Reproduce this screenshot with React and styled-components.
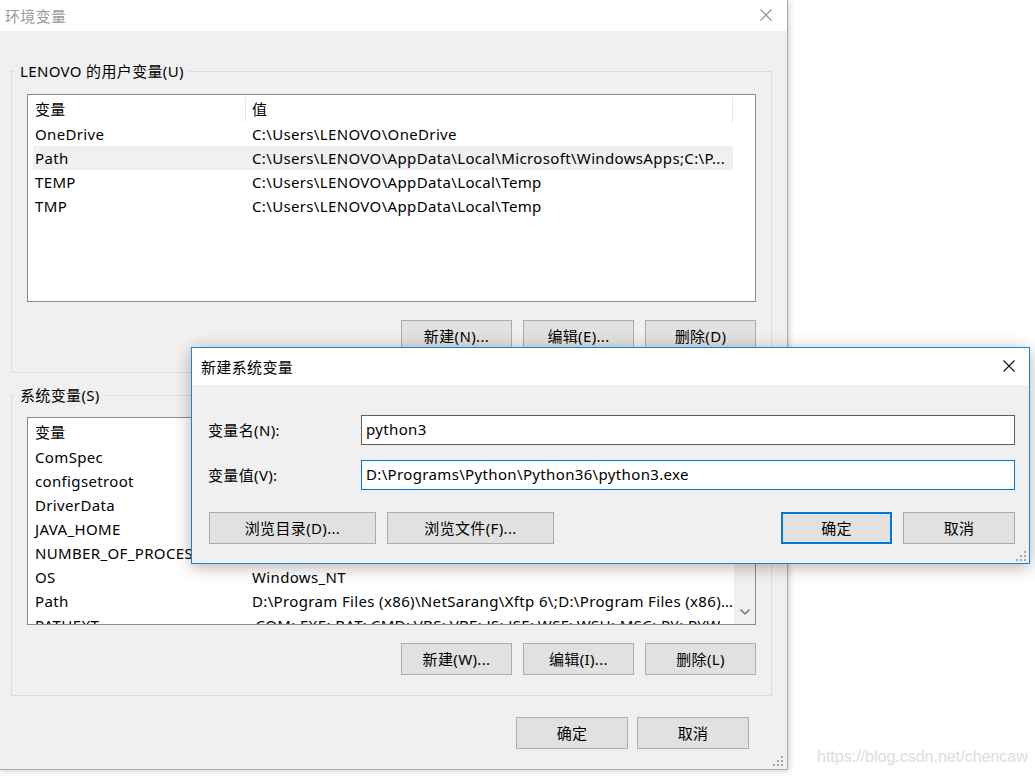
import React from 'react'
import styled, { createGlobalStyle } from 'styled-components'

const GlobalStyle = createGlobalStyle`
  html, body { margin: 0; padding: 0; background: #fff; }
  body {
    font-family: "Noto Sans", "Noto Sans CJK SC", sans-serif;
    font-size: 15px;
    letter-spacing: 0.35px;
    color: #000;
  }
  #root { position: relative; width: 1035px; height: 776px; overflow: hidden; }
`

const userVars = [
  { name: 'OneDrive', value: 'C:\\Users\\LENOVO\\OneDrive' },
  { name: 'Path', value: 'C:\\Users\\LENOVO\\AppData\\Local\\Microsoft\\WindowsApps;C:\\P...', selected: true },
  { name: 'TEMP', value: 'C:\\Users\\LENOVO\\AppData\\Local\\Temp' },
  { name: 'TMP', value: 'C:\\Users\\LENOVO\\AppData\\Local\\Temp' },
]

const systemVars = [
  { name: 'ComSpec', value: 'C:\\WINDOWS\\system32\\cmd.exe' },
  { name: 'configsetroot', value: 'C:\\WINDOWS\\ConfigSetRoot' },
  { name: 'DriverData', value: 'C:\\Windows\\System32\\Drivers\\DriverData' },
  { name: 'JAVA_HOME', value: 'C:\\Program Files\\Java\\jdk1.8.0_201' },
  { name: 'NUMBER_OF_PROCESSORS', value: '8' },
  { name: 'OS', value: 'Windows_NT' },
  { name: 'Path', value: 'D:\\Program Files (x86)\\NetSarang\\Xftp 6\\;D:\\Program Files (x86)...' },
  { name: 'PATHEXT', value: '.COM;.EXE;.BAT;.CMD;.VBS;.VBE;.JS;.JSE;.WSF;.WSH;.MSC;.PY;.PYW' },
]

const Window = styled.div`
  position: relative;
  width: 788px;
  height: 770px;
  box-sizing: border-box;
  border-right: 1px solid #a9a9a9;
  border-bottom: 1px solid #a9a9a9;
  box-shadow: 1px 1px 6px rgba(0, 0, 0, 0.2);
  background: #f0f0f0;
  display: flex;
  flex-direction: column;
`

const TitleBar = styled.div`
  height: ${p => p.$h}px;
  flex: none;
  background: #fff;
  display: flex;
  align-items: center;
  justify-content: space-between;
  padding: 0 ${p => p.$pr}px 1px ${p => p.$pl}px;
  box-sizing: border-box;
  color: ${p => (p.$inactive ? '#9a9a9a' : '#000')};
  font-size: 15px;
`

const Body = styled.div`
  flex: 1;
  display: flex;
  flex-direction: column;
  padding: 0 15px 0 11px;
`

const Group = styled.fieldset`
  margin: ${p => p.$mt}px 0 0;
  padding: 0;
  border: 1px solid #dcdcdc;
  min-width: 0;
`

const Legend = styled.legend`
  margin-left: 3px;
  padding: 0 5px;
  line-height: 20px;
  font-size: 15px;
`

const GroupInner = styled.div`
  padding: ${p => p.$pt}px 15px ${p => p.$pb}px 15px;
  display: flex;
  flex-direction: column;
`

const ListBox = styled.div`
  height: 208px;
  box-sizing: border-box;
  border: 1px solid #8b8b8b;
  background: #fff;
  display: flex;
  overflow: hidden;
`

const ListContent = styled.div`
  flex: 1;
  min-width: 0;
`

const Cols = styled.div`
  display: grid;
  grid-template-columns: 213px 487px;
  padding-left: 5px;
`

const HeaderRow = styled(Cols)`
  height: 27px;
`

const HeaderCell = styled.div`
  margin-top: 2px;
  padding: 0 0 3px ${p => p.$pad}px;
  border-right: 1px solid #e5e5e5;
  display: flex;
  align-items: center;
  box-sizing: border-box;
`

const Row = styled(Cols)`
  height: 24px;
  & > div { background: ${p => (p.$selected ? '#f0f0f0' : 'transparent')}; }
`

const Cell = styled.div`
  padding-left: ${p => p.$pad}px;
  line-height: 24px;
  white-space: nowrap;
  overflow: hidden;
  text-overflow: ellipsis;
`

const Scrollbar = styled.div`
  width: 21px;
  flex: none;
  background: #f0f0f0;
  display: flex;
  flex-direction: column;
  justify-content: flex-end;
`

const ScrollArrow = styled.div`
  height: 23px;
  display: flex;
  align-items: center;
  justify-content: center;
  padding-bottom: 1px;
`

const ButtonRow = styled.div`
  display: flex;
  justify-content: ${p => p.$justify || 'flex-end'};
  gap: ${p => p.$gap}px;
  margin-top: ${p => p.$mt}px;
  padding-right: ${p => p.$pr || 0}px;
  padding-left: ${p => p.$pl || 0}px;
`

const ButtonGroup = styled.div`
  display: flex;
  gap: 11px;
`

const Button = styled.button`
  width: ${p => p.$w}px;
  height: 32px;
  box-sizing: border-box;
  background: #e1e1e1;
  border: ${p => (p.$default ? '2px solid #0078d7' : '1px solid #adadad')};
  border-radius: 0;
  font-family: inherit;
  font-size: 15px;
  letter-spacing: inherit;
  color: #000;
  padding: 0 0 2px;
  display: flex;
  align-items: center;
  justify-content: center;
`

const Grip = styled.div`
  position: absolute;
  right: ${p => p.$r}px;
  bottom: ${p => p.$b}px;
  line-height: 0;
`

const Dialog = styled.div`
  position: absolute;
  left: 191px;
  top: 347px;
  width: 839px;
  height: 217px;
  box-sizing: border-box;
  border: 1px solid #1883d7;
  background: #f0f0f0;
  box-shadow: 0 3px 16px rgba(0, 0, 0, 0.3);
  display: flex;
  flex-direction: column;
`

const DialogBody = styled.div`
  flex: 1;
  padding: 30px 14px 0 16px;
  display: flex;
  flex-direction: column;
`

const FormGrid = styled.div`
  display: grid;
  grid-template-columns: 153px 1fr;
  row-gap: 15px;
  align-items: center;
`

const Label = styled.div`
  font-size: 15px;
  padding-bottom: 2px;
`

const Input = styled.div`
  height: 30px;
  box-sizing: border-box;
  background: #fff;
  border: 1px solid ${p => (p.$focused ? '#0078d7' : '#5c5c5c')};
  padding: 0 0 2px 4px;
  display: flex;
  align-items: center;
  font-size: 15px;
  white-space: nowrap;
`

const Watermark = styled.div`
  position: absolute;
  left: 817px;
  top: 748px;
  font-family: "Liberation Sans", Arial, sans-serif;
  font-size: 16px;
  letter-spacing: 0;
  color: #dcdcdc;
`

const CloseIcon = ({ color }) => (
  <svg width="12" height="12" viewBox="0 0 12 12">
    <path d="M0.5 0.5 L11.5 11.5 M11.5 0.5 L0.5 11.5" stroke={color} strokeWidth="1.1" fill="none" />
  </svg>
)

const GripIcon = () => (
  <svg width="12" height="12" viewBox="0 0 12 12" fill="#a6a6a6">
    <rect x="9" y="1" width="2" height="2" />
    <rect x="5" y="5" width="2" height="2" />
    <rect x="9" y="5" width="2" height="2" />
    <rect x="1" y="9" width="2" height="2" />
    <rect x="5" y="9" width="2" height="2" />
    <rect x="9" y="9" width="2" height="2" />
  </svg>
)

const ListView = ({ items, scroll }) => (
  <ListBox>
    <ListContent>
      <HeaderRow>
        <HeaderCell $pad={2}>变量</HeaderCell>
        <HeaderCell $pad={6}>值</HeaderCell>
      </HeaderRow>
      {items.map(item => (
        <Row key={item.name} $selected={item.selected}>
          <Cell $pad={2}>{item.name}</Cell>
          <Cell $pad={6}>{item.value}</Cell>
        </Row>
      ))}
    </ListContent>
    {scroll && (
      <Scrollbar>
        <ScrollArrow>
          <svg width="10" height="6" viewBox="0 0 10 6">
            <path d="M0.5 0.5 L5 5 L9.5 0.5" stroke="#606060" strokeWidth="1.2" fill="none" />
          </svg>
        </ScrollArrow>
      </Scrollbar>
    )}
  </ListBox>
)

const App = () => {
  return (
    <>
      <GlobalStyle />
      <Window>
        <TitleBar $h={31} $pl={5} $pr={15} $inactive>
          <span>环境变量</span>
          <CloseIcon color="#8a8a8a" />
        </TitleBar>
        <Body>
          <Group $mt={30}>
            <Legend>LENOVO 的用户变量(U)</Legend>
            <GroupInner $pt={13} $pb={20}>
              <ListView items={userVars} />
              <ButtonRow $gap={11} $mt={18}>
                <Button $w={111}>新建(N)...</Button>
                <Button $w={111}>编辑(E)...</Button>
                <Button $w={111}>删除(D)</Button>
              </ButtonRow>
            </GroupInner>
          </Group>
          <Group $mt={12}>
            <Legend>系统变量(S)</Legend>
            <GroupInner $pt={12} $pb={20}>
              <ListView items={systemVars} scroll />
              <ButtonRow $gap={11} $mt={18}>
                <Button $w={111}>新建(W)...</Button>
                <Button $w={111}>编辑(I)...</Button>
                <Button $w={111}>删除(L)</Button>
              </ButtonRow>
            </GroupInner>
          </Group>
          <ButtonRow $gap={9} $mt={21} $pr={23}>
            <Button $w={112}>确定</Button>
            <Button $w={112}>取消</Button>
          </ButtonRow>
        </Body>
        <Grip $r={3} $b={2}>
          <GripIcon />
        </Grip>
      </Window>

      <Dialog>
        <TitleBar $h={37} $pl={9} $pr={14}>
          <span>新建系统变量</span>
          <CloseIcon color="#111" />
        </TitleBar>
        <DialogBody>
          <FormGrid>
            <Label>变量名(N):</Label>
            <Input>python3</Input>
            <Label>变量值(V):</Label>
            <Input $focused>D:\Programs\Python\Python36\python3.exe</Input>
          </FormGrid>
          <ButtonRow $justify="space-between" $mt={22} $pl={1}>
            <ButtonGroup>
              <Button $w={167}>浏览目录(D)...</Button>
              <Button $w={167}>浏览文件(F)...</Button>
            </ButtonGroup>
            <ButtonGroup>
              <Button $w={111} $default>确定</Button>
              <Button $w={112}>取消</Button>
            </ButtonGroup>
          </ButtonRow>
        </DialogBody>
        <Grip $r={2} $b={1}>
          <GripIcon />
        </Grip>
      </Dialog>

      <Watermark>https://blog.csdn.net/chencaw</Watermark>
    </>
  )
}

export default App
